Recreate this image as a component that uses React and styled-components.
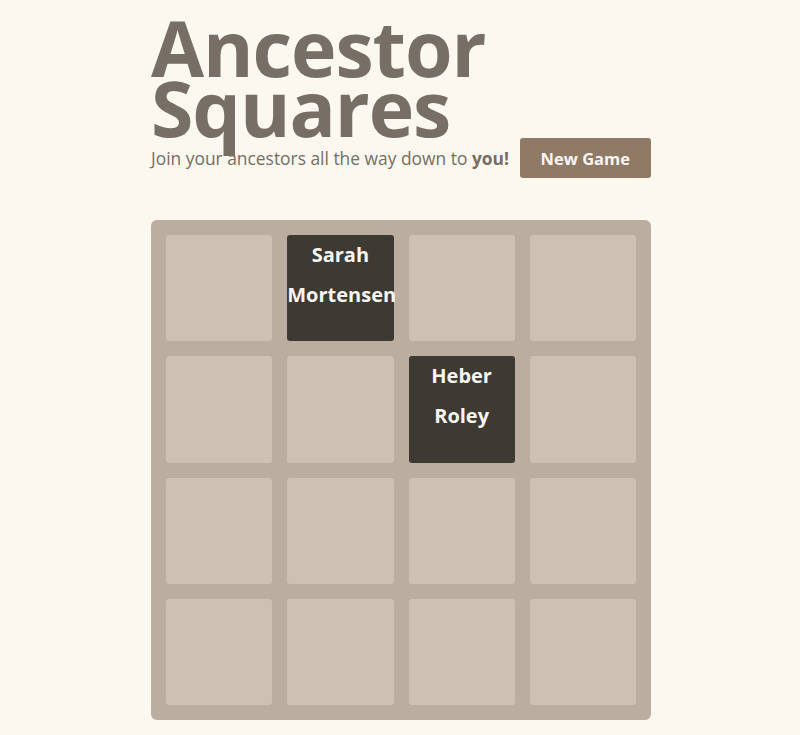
import React from "react";
import styled, { createGlobalStyle } from "styled-components";

const GlobalStyle = createGlobalStyle`
  html, body {
    margin: 0;
    padding: 0;
    background: #faf8ef;
    color: #776e65;
    font-family: "Open Sans", "Noto Sans", Arial, sans-serif;
  }
`;

const Container = styled.div`
  width: 500px;
  margin: 0 0 0 calc(50% - 249px);
  padding-top: 18px;
`;

const Title = styled.h1`
  margin: 0;
  font-size: 77px;
  line-height: 60px;
  font-weight: 700;
  letter-spacing: -1.1px;
  color: #776e65;
  width: 380px;
`;

const AboveGame = styled.div`
  display: flex;
  align-items: center;
  justify-content: space-between;
  height: 40px;
`;

const Intro = styled.p`
  margin: 0;
  font-size: 17.4px;
  line-height: 40px;
  color: #776e65;

  strong {
    font-weight: 700;
  }
`;

const RestartButton = styled.button`
  height: 40px;
  padding: 0 21px;
  border: none;
  border-radius: 3px;
  background: #8f7a66;
  color: #f9f6f2;
  font-family: inherit;
  font-size: 16.5px;
  font-weight: 700;
  cursor: pointer;
`;

const Board = styled.div`
  margin-top: 42px;
  width: 500px;
  height: 500px;
  box-sizing: border-box;
  padding: 15px;
  background: #bbada0;
  border-radius: 6px;
  display: grid;
  grid-template-columns: repeat(4, 106.25px);
  grid-template-rows: repeat(4, 106.25px);
  gap: 15px;
`;

const Cell = styled.div`
  border-radius: 3px;
  background: ${(p) => (p.$filled ? "#3c3a32" : "#cdc1b4")};
  color: #f9f6f2;
  font-size: 20px;
  font-weight: 700;
  line-height: 40px;
  text-align: center;
  white-space: nowrap;
`;

const tiles = {
  1: ["Sarah", "Mortensen"],
  6: ["Heber", "Roley"],
};

export default function App() {
  return (
    <>
      <GlobalStyle />
      <Container>
        <Title>Ancestor Squares</Title>
        <AboveGame>
          <Intro>
            Join your ancestors all the way down to <strong>you!</strong>
          </Intro>
          <RestartButton>New Game</RestartButton>
        </AboveGame>
        <Board>
          {Array.from({ length: 16 }, (_, i) => (
            <Cell key={i} $filled={!!tiles[i]}>
              {tiles[i] &&
                tiles[i].map((line) => <div key={line}>{line}</div>)}
            </Cell>
          ))}
        </Board>
      </Container>
    </>
  );
}
